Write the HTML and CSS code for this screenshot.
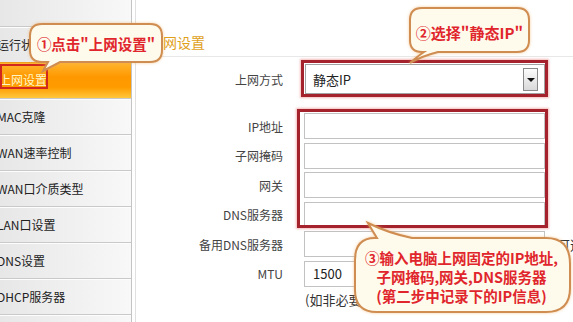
FILE: index.html
```html
<!DOCTYPE html>
<html lang="zh-CN">
<head>
    <meta charset="UTF-8">
    <title>上网设置</title>
    <link rel="stylesheet" href="styles.css">
</head>
<body>
    <div class="page">
        <aside class="menu">
            <div class="menu-top"></div>
            <div class="item">运行状态</div>
            <div class="item on">上网设置</div>
            <div class="item">MAC克隆</div>
            <div class="item">WAN速率控制</div>
            <div class="item">WAN口介质类型</div>
            <div class="item">LAN口设置</div>
            <div class="item">DNS设置</div>
            <div class="item">DHCP服务器</div>
            <div class="item">系统工具</div>
        </aside>
        <div class="gap"></div>

        <main class="content">
            <h2 class="title">上网设置</h2>
            <div class="form">
                <div class="row sel">
                    <span class="label">上网方式</span>
                    <div class="select">
                        <span>静态IP</span>
                        <span class="arrow"></span>
                    </div>
                </div>
                <div class="row in">
                    <span class="label">IP地址</span>
                    <div class="field"></div>
                </div>
                <div class="row in">
                    <span class="label">子网掩码</span>
                    <div class="field"></div>
                </div>
                <div class="row in">
                    <span class="label">网关</span>
                    <div class="field"></div>
                </div>
                <div class="row in">
                    <span class="label">DNS服务器</span>
                    <div class="field"></div>
                </div>
                <div class="row in">
                    <span class="label">备用DNS服务器</span>
                    <div class="field"></div>
                    <span class="hint">可选</span>
                </div>
                <div class="row in">
                    <span class="label">MTU</span>
                    <div class="field short">1500</div>
                </div>
                <div class="note">(如非必要，请勿修改此项)</div>
            </div>
        </main>

        <!-- annotations drawn over the screenshot -->
        <div class="mark"></div>
        <div class="box b1"></div>
        <div class="box b2"></div>

        <div class="callout c1">
            <svg width="140" height="52" viewBox="0 0 140 52">
                <path d="M14 2 H122 Q134 2 134 14 V28 Q134 40 122 40 H32 L15 49 L20 40 H14 Q2 40 2 28 V14 Q2 2 14 2 Z"/>
            </svg>
            <div class="text">①点击"上网设置"</div>
        </div>

        <div class="callout c2">
            <svg width="126" height="60" viewBox="0 0 126 60">
                <path d="M16 2 H111 Q123 2 123 14 V34 Q123 46 111 46 H32 Q16 50 4 57 Q12 50 18 46 H16 Q4 46 4 34 V14 Q4 2 16 2 Z"/>
            </svg>
            <div class="text">②选择"静态IP"</div>
        </div>

        <div class="callout c3">
            <svg width="221" height="100" viewBox="0 0 221 100">
                <path d="M23 18 H25 Q20 10 16 3 Q36 13 60 18 H194 Q218 18 218 44 V68 Q218 92 194 92 H25 Q3 92 3 70 V40 Q3 18 23 18 Z"/>
            </svg>
            <div class="text">③输入电脑上网固定的IP地址,<br>子网掩码,网关,DNS服务器<br>(第二步中记录下的IP信息)</div>
        </div>
    </div>
</body>
</html>
```

FILE: styles.css
```css
* {
    box-sizing: border-box;
    margin: 0;
    padding: 0;
}

body {
    font-family: "Noto Sans CJK SC", "Liberation Sans", sans-serif;
    background: #fff;
    color: #333;
}

.page {
    position: relative;
    display: flex;
    width: 573px;
    height: 322px;
    overflow: hidden;
}

/* left menu */
.menu {
    width: 132px;
    flex-shrink: 0;
    background: linear-gradient(to right, #e7e7e7, #f8f8f8);
    border-right: 1px solid #c4c4c4;
    overflow: hidden;
}

.menu-top {
    height: 26px;
}

.item {
    height: 36px;
    line-height: 35px;
    border-top: 1px solid #c9c9c9;
    box-shadow: inset 0 1px #fdfdfd;
    font-size: 12px;
    color: #222;
    text-indent: -3px;
    white-space: nowrap;
}

.item.on {
    border-top-color: #f0a020;
    box-shadow: none;
    background: linear-gradient(#ffb52e, #ff9800 40%, #ff9c00 70%, #ffc83c);
    color: #fff6c8;
    text-indent: -1px;
    line-height: 33px;
}

.gap {
    width: 4px;
    flex-shrink: 0;
    border-right: 1px solid #e0e0e0;
}

/* main content */
.content {
    flex: 1;
}

.title {
    height: 57px;
    padding: 32px 0 0 13px;
    line-height: 20px;
    font-size: 14px;
    font-weight: normal;
    color: #e0a01a;
    border-bottom: 1px solid #e8e8e8;
}

.form {
    padding-top: 7px;
}

.row {
    display: flex;
    align-items: center;
}

.row.sel {
    height: 30px;
    margin-bottom: 19px;
}

.row.in {
    height: 26px;
    margin-bottom: 3.5px;
}

.label {
    width: 147px;
    margin-right: 21px;
    text-align: right;
    font-size: 12px;
    color: #444;
}

.select {
    display: flex;
    align-items: center;
    width: 240px;
    height: 30px;
    margin-left: 1px;
    padding-left: 7px;
    border: 1px solid #a2a2a2;
    font-size: 13px;
    color: #222;
}

.arrow {
    position: relative;
    width: 15px;
    height: 23px;
    margin-left: auto;
    margin-right: 6px;
    border: 1px solid #8a8a8a;
    background: linear-gradient(#fcfcfc, #d9d9d9);
}

.arrow::after {
    content: '';
    position: absolute;
    left: 3px;
    top: 9px;
    border-left: 4px solid transparent;
    border-right: 4px solid transparent;
    border-top: 4px solid #111;
}

.field {
    width: 241px;
    height: 26px;
    padding-left: 8px;
    line-height: 24px;
    border: 1px solid #c2c2c2;
    font-size: 13px;
    color: #222;
}

.hint {
    margin-left: 12px;
    font-size: 13px;
    color: #333;
    white-space: nowrap;
}

.note {
    margin: 3px 0 0 169px;
    line-height: 20px;
    font-size: 13px;
    color: #333;
    white-space: nowrap;
}

/* annotations */
.mark {
    position: absolute;
    left: 0;
    top: 64px;
    width: 48px;
    height: 25px;
    border: 2px solid #d0281e;
}

.box {
    position: absolute;
    border: 3px solid #a3222c;
    box-shadow: 0 0 2px 1px rgba(235, 130, 130, 0.55);
}

.box.b1 {
    left: 301px;
    top: 60px;
    width: 247px;
    height: 37px;
}

.box.b2 {
    left: 297px;
    top: 109px;
    width: 251px;
    height: 119px;
}

.callout {
    position: absolute;
}

.callout svg {
    display: block;
    filter: drop-shadow(0 0 1.5px rgba(240, 170, 90, 0.6));
}

.callout path {
    fill: #fffbec;
    stroke: #cf8d52;
    stroke-width: 2;
}

.callout .text {
    position: absolute;
    display: flex;
    align-items: center;
    justify-content: center;
    text-align: center;
    font-size: 15px;
    font-weight: bold;
    color: #e0262c;
    white-space: nowrap;
}

.c1 {
    left: 28px;
    top: 22px;
}

.c1 .text {
    left: 2px;
    top: 2px;
    width: 132px;
    height: 38px;
    font-size: 14.5px;
}

.c2 {
    left: 406px;
    top: 6px;
}

.c2 .text {
    left: 4px;
    top: 4px;
    width: 119px;
    height: 44px;
}

.c3 {
    left: 352px;
    top: 220px;
}

.c3 .text {
    left: 3px;
    top: 19px;
    width: 213px;
    height: 74px;
    line-height: 19px;
    font-size: 14.5px;
}
```
